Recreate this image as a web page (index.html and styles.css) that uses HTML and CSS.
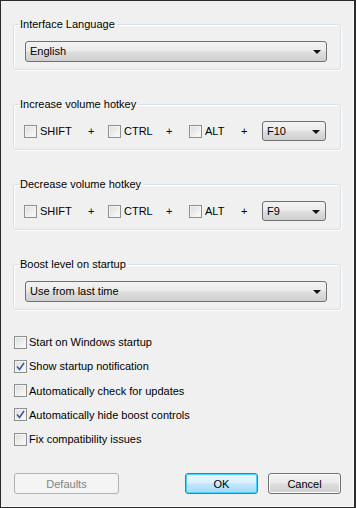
FILE: index.html
```html
<!DOCTYPE html>
<html lang="en">
<head>
    <meta charset="UTF-8">
    <meta name="viewport" content="width=device-width, initial-scale=1.0">
    <title>Settings</title>
    <link rel="stylesheet" href="styles.css">
</head>
<body>
    <div class="window">
        <fieldset class="group">
            <legend>Interface Language</legend>
            <div class="select wide">English <span class="arrow"></span></div>
        </fieldset>

        <fieldset class="group">
            <legend>Increase volume hotkey</legend>
            <div class="hotkey">
                <span class="key w-shift"><span class="box"></span>SHIFT</span>
                <span class="plus p1">+</span>
                <span class="key w-ctrl"><span class="box"></span>CTRL</span>
                <span class="plus p2">+</span>
                <span class="key w-alt"><span class="box"></span>ALT</span>
                <span class="plus p3">+</span>
                <div class="select small">F10 <span class="arrow"></span></div>
            </div>
        </fieldset>

        <fieldset class="group">
            <legend>Decrease volume hotkey</legend>
            <div class="hotkey">
                <span class="key w-shift"><span class="box"></span>SHIFT</span>
                <span class="plus p1">+</span>
                <span class="key w-ctrl"><span class="box"></span>CTRL</span>
                <span class="plus p2">+</span>
                <span class="key w-alt"><span class="box"></span>ALT</span>
                <span class="plus p3">+</span>
                <div class="select small">F9 <span class="arrow"></span></div>
            </div>
        </fieldset>

        <fieldset class="group last">
            <legend>Boost level on startup</legend>
            <div class="select wide">Use from last time <span class="arrow"></span></div>
        </fieldset>

        <div class="options">
            <div class="option"><span class="box"></span>Start on Windows startup</div>
            <div class="option"><span class="box checked"><svg viewBox="0 0 9 9" width="9" height="9"><path d="M1 4.5 L3.5 7.5 L8 1" fill="none" stroke="#3a56a8" stroke-width="1.6"/></svg></span>Show startup notification</div>
            <div class="option"><span class="box"></span>Automatically check for updates</div>
            <div class="option"><span class="box checked"><svg viewBox="0 0 9 9" width="9" height="9"><path d="M1 4.5 L3.5 7.5 L8 1" fill="none" stroke="#3a56a8" stroke-width="1.6"/></svg></span>Automatically hide boost controls</div>
            <div class="option"><span class="box"></span>Fix compatibility issues</div>
        </div>

        <div class="buttons">
            <button class="btn defaults" disabled>Defaults</button>
            <span class="spacer"></span>
            <button class="btn ok">OK</button>
            <button class="btn">Cancel</button>
        </div>
    </div>
</body>
</html>
```

FILE: styles.css
```css
body {
    margin: 0;
    font-family: "Liberation Sans", Arial, sans-serif;
    font-size: 11px;
    color: #000;
}
.window {
    box-sizing: border-box;
    width: 356px;
    height: 508px;
    background: #f0f0f0;
    border: 1px solid #2a2a2a;
    border-right-width: 2px;
    box-shadow: inset -1px -1px 0 #fafafa;
    padding: 17px 13px 0 12px;
    display: flex;
    flex-direction: column;
}
.group {
    margin: 0 0 28px 0;
    padding: 10px 13px 7px 11px;
    border: 1px solid #d5dfe5;
    border-radius: 3px;
    box-shadow: inset 1px 1px 0 #fff, 1px 1px 0 #fff;
    min-width: 0;
}
.group.last {
    margin-bottom: 19px;
}
.group legend {
    margin-left: -6px;
    padding: 0 2px 0 1px;
    line-height: 13px;
}
.select {
    box-sizing: border-box;
    position: relative;
    height: 21px;
    line-height: 19px;
    padding-left: 4px;
    border: 1px solid #707070;
    border-radius: 3px;
    background: linear-gradient(#f2f2f2 0%, #ebebeb 45%, #dddddd 55%, #cfcfcf 100%);
}
.select.small {
    width: 64px;
    height: 20px;
    line-height: 18px;
}
.arrow {
    position: absolute;
    right: 5px;
    top: 8px;
    width: 0;
    height: 0;
    border-left: 4px solid transparent;
    border-right: 4px solid transparent;
    border-top: 4px solid #111;
}
.hotkey {
    display: flex;
    align-items: center;
    margin-left: -1px;
    height: 20px;
    margin-bottom: 1px;
}
.key {
    display: flex;
    align-items: center;
}
.w-shift { width: 64px; }
.w-ctrl { width: 58px; }
.w-alt { width: 52px; }
.p1 { width: 20px; }
.p2 { width: 23px; }
.p3 { width: 21px; }
.box {
    box-sizing: border-box;
    width: 13px;
    height: 13px;
    flex: none;
    border: 1px solid #8e8f8f;
    background: linear-gradient(135deg, #dcdcdc, #f6f6f6 80%, #fbfbfb);
    box-shadow: inset 0 0 0 1px #f4f4f4;
    margin-right: 3px;
    display: flex;
    align-items: center;
    justify-content: center;
}
.options {
    margin-top: 1px;
}
.option {
    display: flex;
    align-items: center;
    height: 24.25px;
    padding-left: 1px;
}
.option .box {
    margin-right: 2px;
}
.buttons {
    display: flex;
    margin-top: 22px;
    padding-left: 1px;
}
.spacer {
    flex: 1;
}
.btn {
    box-sizing: border-box;
    width: 73px;
    height: 21px;
    margin-left: 10px;
    font-family: "Liberation Sans", Arial, sans-serif;
    font-size: 11px;
    color: #000;
    border: 1px solid #707070;
    border-radius: 3px;
    background: linear-gradient(#f2f2f2 0%, #ebebeb 45%, #dddddd 55%, #cfcfcf 100%);
    box-shadow: inset 0 0 0 1px #fcfcfc;
    padding: 0;
}
.btn.ok {
    border-color: #3c7fb1;
    background: linear-gradient(#eaf6fd 0%, #d9f0fc 45%, #bee6fd 55%, #a7d9f5 100%);
    box-shadow: inset 0 0 0 1px #48d3f8;
}
.btn.defaults {
    width: 105px;
    margin-left: 0;
    color: #838383;
    border-color: #adb2b5;
    background: #f4f4f4;
    box-shadow: none;
}
```
